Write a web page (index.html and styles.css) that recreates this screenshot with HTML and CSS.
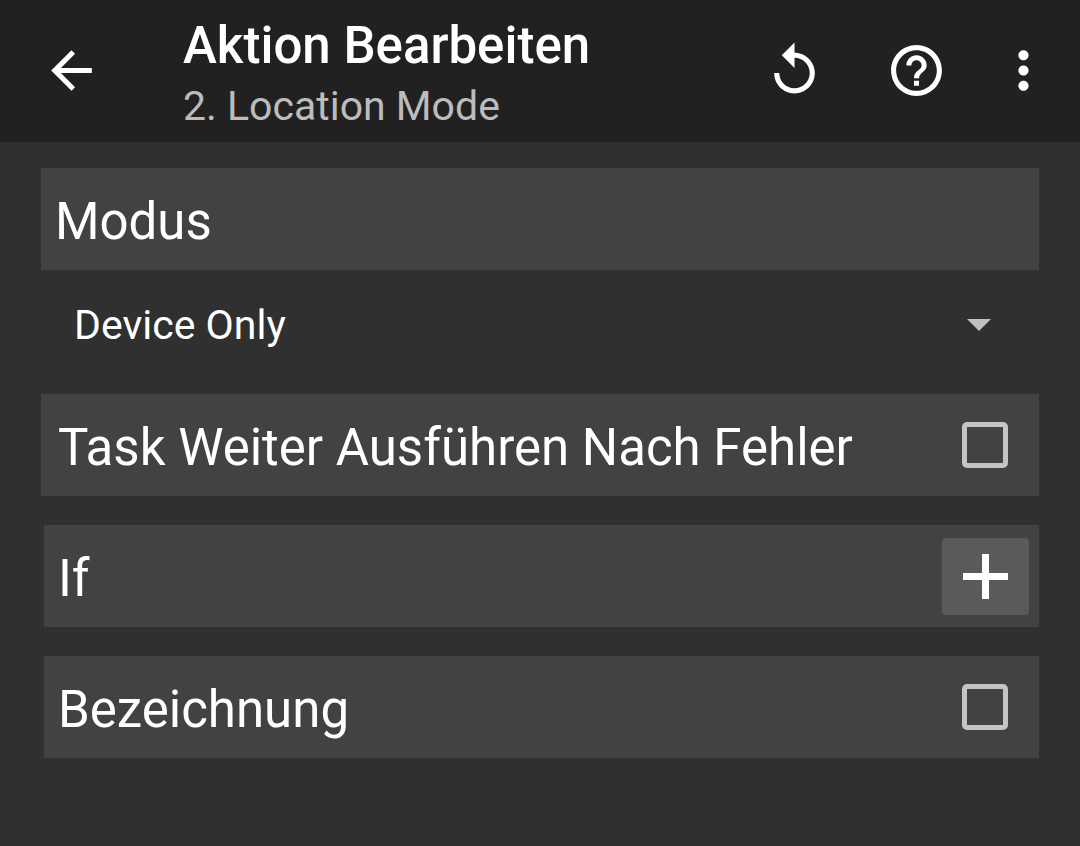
FILE: index.html
```html
<!DOCTYPE html>
<html lang="de">
<head>
<meta charset="utf-8">
<meta name="viewport" content="width=device-width, initial-scale=1">
<title>Aktion Bearbeiten</title>
<link rel="stylesheet" href="styles.css">
</head>
<body>
<header class="toolbar">
  <button class="icon-button back" aria-label="Zurück">
    <svg width="61" height="61" viewBox="0 0 24 24"><path d="M20 11H7.830l5.590-5.590L12 4l-8 8 8 8 1.410-1.410L7.830 13H20v-2z"/></svg>
  </button>
  <div class="titles">
    <h1 class="title">Aktion Bearbeiten</h1>
    <p class="subtitle">2. Location Mode</p>
  </div>
  <div class="actions">
    <button class="icon-button" aria-label="Zurücksetzen">
      <svg width="61" height="61" viewBox="0 0 24 24"><path d="M12 5V1L7 6l5 5V7c3.310 0 6 2.690 6 6s-2.690 6-6 6-6-2.690-6-6H4c0 4.420 3.580 8 8 8s8-3.580 8-8-3.580-8-8-8z"/></svg>
    </button>
    <button class="icon-button" aria-label="Hilfe">
      <svg width="61" height="61" viewBox="0 0 24 24"><path d="M11 18h2v-2h-2v2zm1-16C6.480 2 2 6.480 2 12s4.480 10 10 10 10-4.480 10-10S17.520 2 12 2zm0 18c-4.410 0-8-3.590-8-8s3.590-8 8-8 8 3.590 8 8-3.590 8-8 8zm0-14c-2.210 0-4 1.790-4 4h2c0-1.100.9-2 2-2s2 .9 2 2c0 2-3 1.750-3 5h2c0-2.250 3-2.500 3-5 0-2.210-1.790-4-4-4z"/></svg>
    </button>
    <button class="icon-button more" aria-label="Mehr">
      <svg width="61" height="61" viewBox="0 0 24 24"><path d="M12 8c1.100 0 2-.9 2-2s-.9-2-2-2-2 .9-2 2 .9 2 2 2zm0 2c-1.100 0-2 .9-2 2s.9 2 2 2 2-.9 2-2-.9-2-2-2zm0 6c-1.100 0-2 .9-2 2s.9 2 2 2 2-.9 2-2-.9-2-2-2z"/></svg>
    </button>
  </div>
</header>
<main class="form">
  <section class="field">
    <label class="bar bar-wide bar-heading" for="mode">Modus</label>
    <div class="select-wrap">
      <select class="select" id="mode"><option>Device Only</option></select>
      <svg class="caret" width="24" height="12" viewBox="0 0 24 12"><path d="M0 0h24L12 12z"/></svg>
    </div>
  </section>
  <div class="bar bar-wide">
    <label class="bar-label" for="continue">Task Weiter Ausführen Nach Fehler</label>
    <input class="check" type="checkbox" id="continue">
  </div>
  <div class="bar">
    <span class="bar-label">If</span>
    <button class="add" aria-label="Bedingung hinzufügen">
      <svg width="45" height="45" viewBox="0 0 45 45"><path d="M19 0h7v19h19v7H26v19h-7V26H0v-7h19z"/></svg>
    </button>
  </div>
  <div class="bar">
    <label class="bar-label" for="label">Bezeichnung</label>
    <input class="check" type="checkbox" id="label">
  </div>
</main>
</body>
</html>
```

FILE: styles.css
```css
* { box-sizing: border-box; }
body {
  margin: 0;
  min-height: 100vh;
  background: #303030;
  color: #fff;
  font-family: Roboto, "Liberation Sans", sans-serif;
}
button { border: 0; padding: 0; background: none; color: inherit; }
svg { display: block; fill: currentColor; }
.toolbar {
  display: flex;
  align-items: center;
  min-height: 142px;
  padding: 0 26px 2px 41px;
  background: #212121;
}
.back { margin-right: 81px; }
.titles { flex: 1; padding-top: 12px; }
.title { margin: 0; font-size: 51px; line-height: 60px; font-weight: 500; }
.subtitle { margin: 0; font-size: 41px; line-height: 60px; color: #bcbcbc; }
.actions { display: flex; align-items: center; gap: 61px; }
.more { margin-left: -15px; }
.form {
  display: flex;
  flex-direction: column;
  gap: 29px;
  padding: 26px 41px 40px 44px;
}
.bar {
  display: flex;
  align-items: center;
  justify-content: space-between;
  min-height: 102px;
  padding: 0 10px 0 14px;
  background: #424242;
  font-size: 51px;
}
.bar-wide { margin-left: -3px; padding-left: 17px; }
.bar-heading { padding-top: 4px; padding-left: 14px; }
.bar-label { padding-top: 4px; }
.select-wrap { display: grid; align-items: center; padding-top: 14px; }
.select {
  grid-area: 1 / 1;
  width: 100%;
  height: 81px;
  padding: 0 30px;
  border: 0;
  appearance: none;
  background: none;
  color: inherit;
  font: inherit;
  font-size: 41px;
}
.caret { grid-area: 1 / 1; justify-self: end; margin-right: 48px; color: #c1c1c1; pointer-events: none; }
.check {
  appearance: none;
  width: 46px;
  height: 46px;
  margin: 0 21px 0 0;
  border: 5px solid #c4c4c4;
  border-radius: 5px;
}
.check:checked { background: #c4c4c4; }
.add {
  display: grid;
  place-items: center;
  width: 87px;
  height: 77px;
  border-radius: 4px;
  background: #5a5a5c;
}
```
